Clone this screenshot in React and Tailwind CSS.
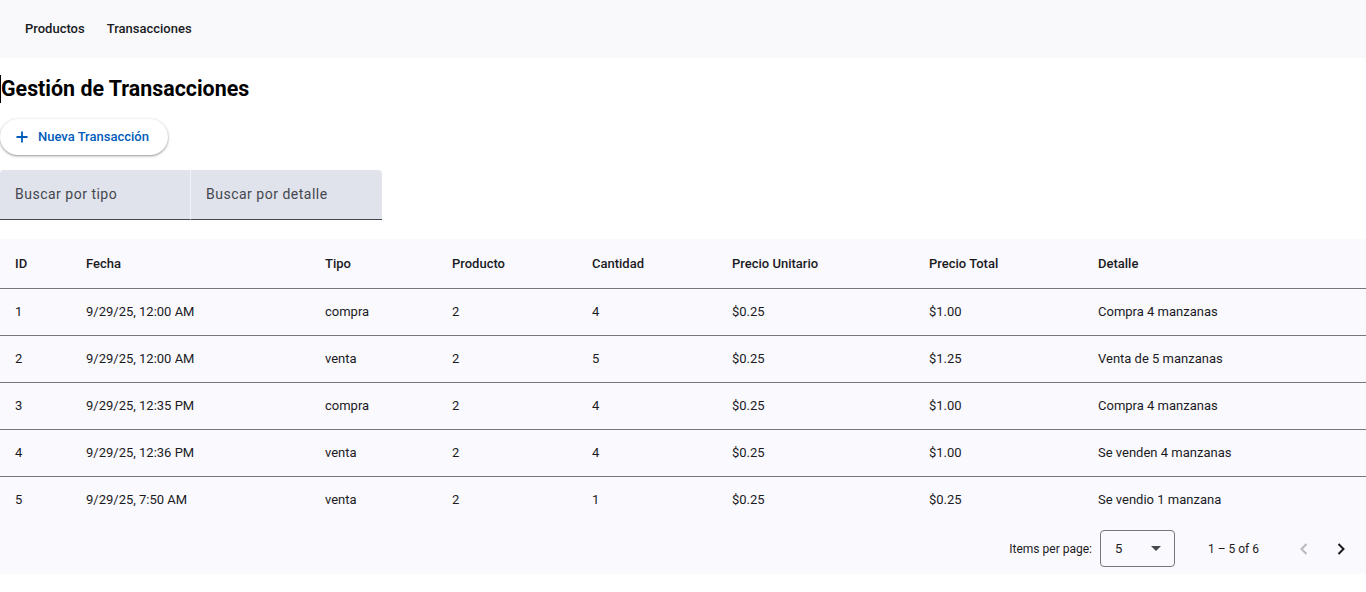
import React from 'react';

const rows = [
  { id: 1, fecha: '9/29/25, 12:00 AM', tipo: 'compra', producto: 2, cantidad: 4, unit: '$0.25', total: '$1.00', detalle: 'Compra 4 manzanas' },
  { id: 2, fecha: '9/29/25, 12:00 AM', tipo: 'venta', producto: 2, cantidad: 5, unit: '$0.25', total: '$1.25', detalle: 'Venta de 5 manzanas' },
  { id: 3, fecha: '9/29/25, 12:35 PM', tipo: 'compra', producto: 2, cantidad: 4, unit: '$0.25', total: '$1.00', detalle: 'Compra 4 manzanas' },
  { id: 4, fecha: '9/29/25, 12:36 PM', tipo: 'venta', producto: 2, cantidad: 4, unit: '$0.25', total: '$1.00', detalle: 'Se venden 4 manzanas' },
  { id: 5, fecha: '9/29/25, 7:50 AM', tipo: 'venta', producto: 2, cantidad: 1, unit: '$0.25', total: '$0.25', detalle: 'Se vendio 1 manzana' },
];

const cols = ['w-[71px]', 'w-[239px]', 'w-[127px]', 'w-[140px]', 'w-[140px]', 'w-[197px]', 'w-[169px]', ''];
const headers = ['ID', 'Fecha', 'Tipo', 'Producto', 'Cantidad', 'Precio Unitario', 'Precio Total', 'Detalle'];

export default function App() {
  return (
    <div className="min-h-[592px] bg-white font-['Roboto',sans-serif] text-[#1a1b1f]">
      <nav className="h-[58px] bg-[#f9f9fc] flex items-center gap-[22px] px-[25px] text-[13px] font-medium">
        <span>Productos</span>
        <span>Transacciones</span>
      </nav>

      <h2 className="mt-[17px] text-[21.4px] font-bold leading-[28px] text-black border-l border-black w-max">Gestión de Transacciones</h2>

      <button className="mt-[16px] h-[36px] w-[168px] rounded-full bg-white shadow-[0_1px_3px_rgba(0,0,0,0.3),0_1px_2px_rgba(0,0,0,0.15)] flex items-center pl-[15px] gap-[9px] text-[13px] font-medium text-[#005cbb]">
        <svg width="14" height="14" viewBox="0 0 14 14" fill="none" stroke="#005cbb" strokeWidth="1.8">
          <path d="M7 1.5v11M1.5 7h11" />
        </svg>
        Nueva Transacción
      </button>

      <div className="mt-[15px] flex w-[382px]">
        <div className="w-[191px] h-[50px] bg-[#e0e2ec] rounded-tl-[4px] border-b border-[#44474e] flex items-center pl-[15px] text-[14px] tracking-[0.5px] text-[#44474e] border-r border-r-white/60">
          Buscar por tipo
        </div>
        <div className="w-[191px] h-[50px] bg-[#e0e2ec] rounded-tr-[4px] border-b border-[#44474e] flex items-center pl-[15px] text-[14px] tracking-[0.5px] text-[#44474e]">
          Buscar por detalle
        </div>
      </div>

      <div className="mt-[19px] bg-[#faf9fd]">
        <table className="w-full border-collapse text-[13px] text-left">
          <thead>
            <tr className="h-[49px] border-b border-[#74777f]">
              {headers.map((h, i) => (
                <th key={h} className={`${cols[i]} pl-[15px] font-medium`}>{h}</th>
              ))}
            </tr>
          </thead>
          <tbody>
            {rows.map((r, idx) => (
              <tr key={r.id} className={`h-[47px] ${idx < rows.length - 1 ? 'border-b border-[#74777f]' : ''}`}>
                <td className="pl-[15px]">{r.id}</td>
                <td className="pl-[15px]">{r.fecha}</td>
                <td className="pl-[15px]">{r.tipo}</td>
                <td className="pl-[15px]">{r.producto}</td>
                <td className="pl-[15px]">{r.cantidad}</td>
                <td className="pl-[15px]">{r.unit}</td>
                <td className="pl-[15px]">{r.total}</td>
                <td className="pl-[15px]">{r.detalle}</td>
              </tr>
            ))}
          </tbody>
        </table>

        <div className="h-[51px] flex items-center justify-end text-[12px] pr-[7px]">
          <span className="mr-[8px]">Items per page:</span>
          <div className="w-[75px] h-[37px] border border-[#74777f] rounded-[4px] flex items-center justify-between pl-[14px] pr-[13px] text-[13px]">
            <span>5</span>
            <svg width="10" height="5" viewBox="0 0 10 5"><path d="M0 0l5 5 5-5z" fill="#44474e" /></svg>
          </div>
          <span className="ml-[33px] mr-[26px]">1 – 5 of 6</span>
          <button className="w-[37px] h-[37px] flex items-center justify-center">
            <svg width="8" height="12" viewBox="0 0 8 12" fill="none" stroke="#b8b9be" strokeWidth="2"><path d="M6.5 1L1.5 6l5 5" /></svg>
          </button>
          <button className="w-[37px] h-[37px] flex items-center justify-center">
            <svg width="8" height="12" viewBox="0 0 8 12" fill="none" stroke="#1a1b1f" strokeWidth="2"><path d="M1.5 1l5 5-5 5" /></svg>
          </button>
        </div>
      </div>
    </div>
  );
}
